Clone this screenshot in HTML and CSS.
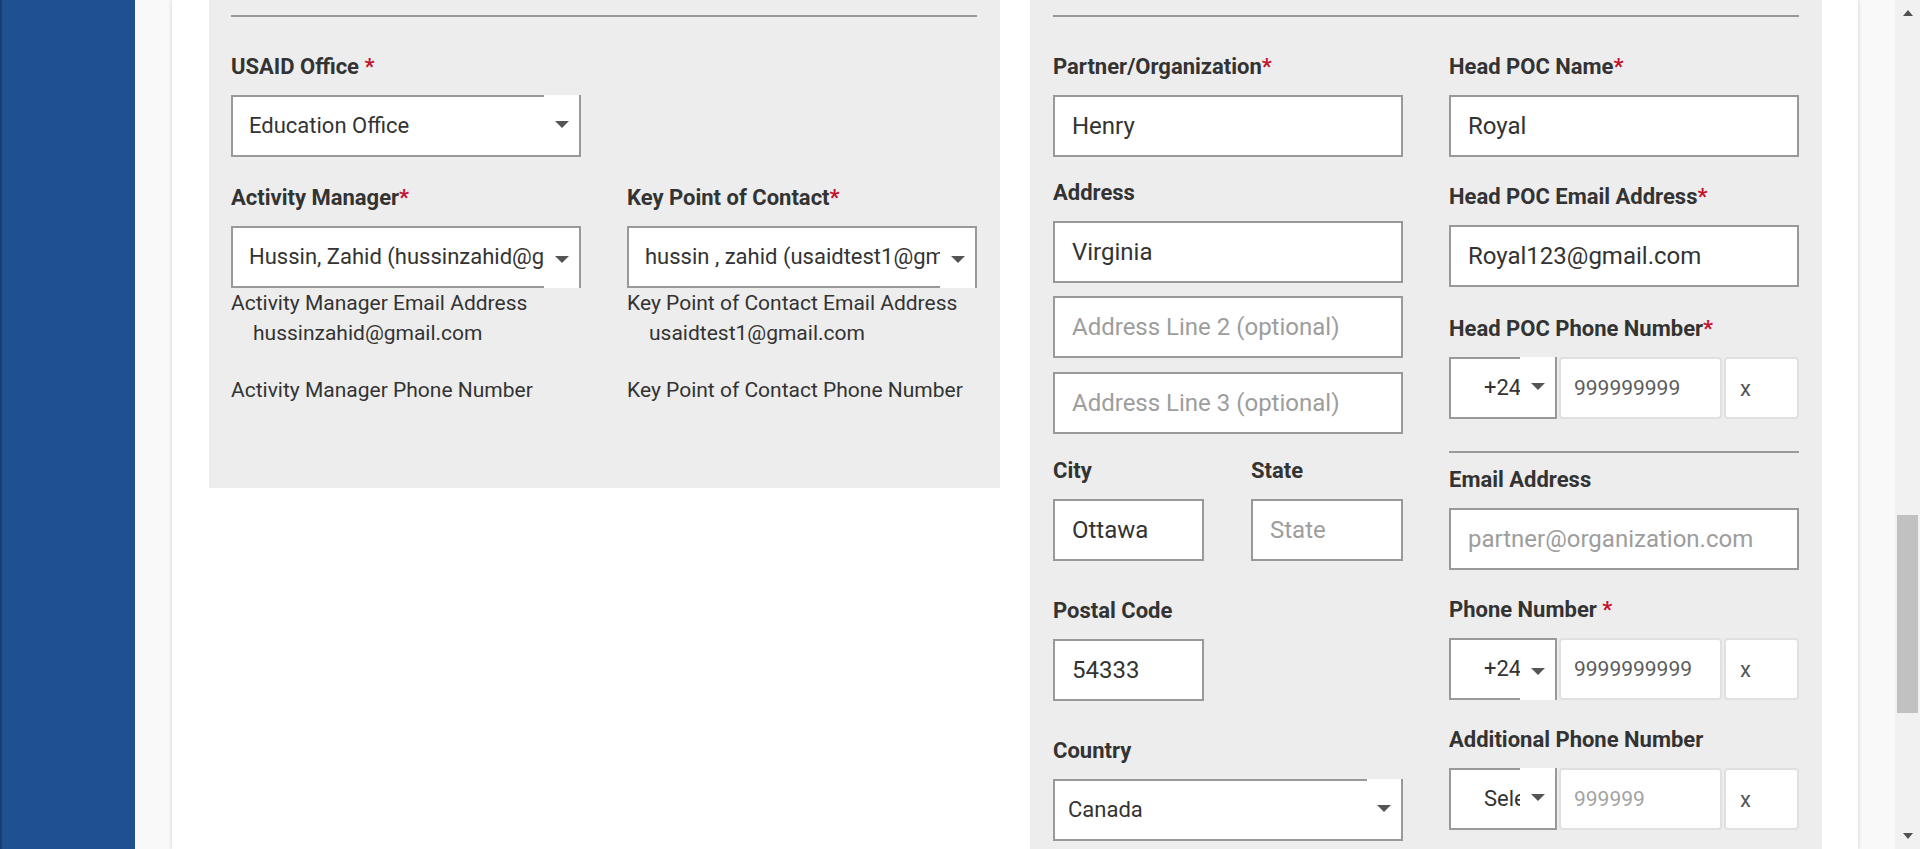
FILE: index.html
```html
<!DOCTYPE html>
<html lang="en">
<head>
<meta charset="utf-8">
<title>Partner Information</title>
<link rel="stylesheet" href="styles.css">
</head>
<body>
<div class="app">
  <aside class="sidebar"></aside>
  <div class="gutter">
    <main class="card">
      <section class="panel panel-usaid">
        <div class="rule"></div>
        <div class="f-office">
          <div class="lbl">USAID Office <span class="req">*</span></div>
          <div class="select">
            <span class="select-text">Education Office</span>
            <span class="arrow-box up"><i class="caret"></i></span>
          </div>
        </div>
        <div class="two-col f-people">
          <div class="col">
            <div class="lbl">Activity Manager<span class="req">*</span></div>
            <div class="select">
              <span class="select-text">Hussin, Zahid (hussinzahid@gmail.com)</span>
              <span class="arrow-box down"><i class="caret"></i></span>
            </div>
            <div class="info">
              <div>Activity Manager Email Address</div>
              <div class="info-val">hussinzahid@gmail.com</div>
              <div class="info-phone">Activity Manager Phone Number</div>
            </div>
          </div>
          <div class="col">
            <div class="lbl">Key Point of Contact<span class="req">*</span></div>
            <div class="select">
              <span class="select-text">hussin , zahid (usaidtest1@gmail.com)</span>
              <span class="arrow-box down"><i class="caret"></i></span>
            </div>
            <div class="info">
              <div>Key Point of Contact Email Address</div>
              <div class="info-val">usaidtest1@gmail.com</div>
              <div class="info-phone">Key Point of Contact Phone Number</div>
            </div>
          </div>
        </div>
      </section>

      <section class="panel panel-partner">
        <div class="rule"></div>
        <div class="two-col f-partner">
          <div class="col">
            <div class="field">
              <div class="lbl">Partner/Organization<span class="req">*</span></div>
              <input class="input" type="text" value="Henry">
            </div>
            <div class="field m-address">
              <div class="lbl">Address</div>
              <input class="input" type="text" value="Virginia">
            </div>
            <input class="input m-line2" type="text" placeholder="Address Line 2 (optional)">
            <input class="input m-line3" type="text" placeholder="Address Line 3 (optional)">
            <div class="city-state m-city">
              <div class="field">
                <div class="lbl">City</div>
                <input class="input" type="text" value="Ottawa">
              </div>
              <div class="field">
                <div class="lbl">State</div>
                <input class="input" type="text" placeholder="State">
              </div>
            </div>
            <div class="field m-postal">
              <div class="lbl">Postal Code</div>
              <input class="input input-short" type="text" value="54333">
            </div>
            <div class="field m-country">
              <div class="lbl">Country</div>
              <div class="select select-country">
                <span class="select-text">Canada</span>
                <span class="arrow-box up"><i class="caret"></i></span>
              </div>
            </div>
          </div>

          <div class="col">
            <div class="field">
              <div class="lbl">Head POC Name<span class="req">*</span></div>
              <input class="input" type="text" value="Royal">
            </div>
            <div class="field m-poc-email">
              <div class="lbl">Head POC Email Address<span class="req">*</span></div>
              <input class="input" type="text" value="Royal123@gmail.com">
            </div>
            <div class="field m-poc-phone">
              <div class="lbl">Head POC Phone Number<span class="req">*</span></div>
              <div class="phone-row">
                <div class="select select-code">
                  <span class="select-text">+24</span>
                  <span class="arrow-box up"><i class="caret"></i></span>
                </div>
                <input class="phone-num" type="text" value="999999999">
                <input class="phone-ext" type="text" value="x">
              </div>
            </div>
            <div class="divider"></div>
            <div class="field m-email">
              <div class="lbl">Email Address</div>
              <input class="input" type="text" placeholder="partner@organization.com">
            </div>
            <div class="field m-phone">
              <div class="lbl">Phone Number <span class="req">*</span></div>
              <div class="phone-row">
                <div class="select select-code">
                  <span class="select-text">+24</span>
                  <span class="arrow-box down"><i class="caret"></i></span>
                </div>
                <input class="phone-num" type="text" value="9999999999">
                <input class="phone-ext" type="text" value="x">
              </div>
            </div>
            <div class="field m-phone">
              <div class="lbl">Additional Phone Number</div>
              <div class="phone-row">
                <div class="select select-code">
                  <span class="select-text">Select</span>
                  <span class="arrow-box up"><i class="caret"></i></span>
                </div>
                <input class="phone-num" type="text" placeholder="999999">
                <input class="phone-ext" type="text" value="x">
              </div>
            </div>
          </div>
        </div>
      </section>
    </main>
  </div>
  <div class="scrollbar">
    <i class="sb-up"></i>
    <div class="sb-thumb"></div>
    <i class="sb-down"></i>
  </div>
</div>
</body>
</html>
```

FILE: styles.css
```css
* { box-sizing: border-box; }

html, body {
  margin: 0;
  padding: 0;
  height: 100%;
}

body {
  font-family: Roboto, "Liberation Sans", Arial, sans-serif;
  color: #333;
  background: #f9f9f9;
  overflow: hidden;
}

.app {
  display: flex;
  height: 849px;
  overflow: hidden;
}

.sidebar {
  width: 135px;
  flex: none;
  background: #1f5190;
  border-left: 2px solid #173f70;
}

.gutter {
  flex: 1;
  min-width: 0;
  display: flex;
  background: #f9f9f9;
  padding: 0 37px;
}

.card {
  flex: 1;
  display: flex;
  align-items: flex-start;
  gap: 30px;
  background: #fff;
  box-shadow: 0 0 4px rgba(0, 0, 0, 0.18);
  padding: 0 36px 0 37px;
}

.panel {
  background: #ededed;
  padding-top: 15px;
}

.panel-usaid {
  width: 791px;
  padding: 15px 23px 83px 22px;
}

.panel-partner {
  width: 792px;
  align-self: stretch;
  padding: 15px 23px 0 23px;
}

.rule {
  height: 2px;
  background: #999;
}

.lbl {
  font-size: 22px;
  font-weight: 700;
  line-height: 24px;
  color: #333;
  margin-bottom: 16px;
  white-space: nowrap;
}

.req { color: #c41230; font-weight: 700; }

.two-col {
  display: grid;
  grid-template-columns: 350px 350px;
  justify-content: space-between;
}

.col { display: flex; flex-direction: column; }

.f-office { margin-top: 38px; width: 350px; }
.f-people { margin-top: 29px; }
.f-partner { margin-top: 38px; align-items: start; }

/* custom select */
.select {
  position: relative;
  height: 62px;
  border: 2px solid #999;
  background: #fff;
  display: flex;
  align-items: center;
  padding-left: 16px;
}

.select-text {
  flex: 1;
  min-width: 0;
  overflow: hidden;
  white-space: nowrap;
  font-size: 22px;
  line-height: 24px;
  color: #333;
}

.arrow-box {
  position: absolute;
  right: 0;
  width: 35px;
  background: #fff;
  display: flex;
  align-items: center;
  justify-content: center;
}

.arrow-box.up { top: -2px; bottom: 2px; }
.arrow-box.down { top: 2px; bottom: -2px; }

.caret {
  width: 0;
  height: 0;
  border-left: 7px solid transparent;
  border-right: 7px solid transparent;
  border-top: 7px solid #555;
}

.select-country { padding-left: 13px; }
.select-country .arrow-box { width: 34px; }

/* info texts */
.info {
  font-size: 21px;
  line-height: 30px;
  color: #333;
}

.info-val { padding-left: 22px; }
.info-phone { margin-top: 27px; }

/* text inputs */
.input {
  display: block;
  width: 100%;
  height: 62px;
  border: 2px solid #999;
  border-radius: 0;
  background: #fff;
  padding: 0 17px;
  font-family: Roboto, "Liberation Sans", Arial, sans-serif;
  font-size: 24px;
  color: #333;
  outline: none;
}

.input::placeholder { color: #9d9d9d; opacity: 1; }

.input-short { width: 151px; }

.m-address { margin-top: 24px; }
.m-line2 { margin-top: 13px; }
.m-line3 { margin-top: 14px; }
.m-city { margin-top: 25px; }
.m-postal { margin-top: 38px; }
.m-country { margin-top: 38px; }

.city-state {
  display: grid;
  grid-template-columns: 151px 152px;
  justify-content: space-between;
}

.m-poc-email { margin-top: 28px; }
.m-poc-phone { margin-top: 30px; }
.m-email { margin-top: 15px; }
.m-phone { margin-top: 28px; }

.divider {
  height: 2px;
  background: #999;
  margin-top: 32px;
}

/* phone rows */
.phone-row {
  display: grid;
  grid-template-columns: 108px 163px 75px;
  column-gap: 2px;
  height: 62px;
}

.select-code { padding-left: 33px; }

.phone-num,
.phone-ext {
  height: 62px;
  width: 100%;
  border: 2px solid #e0e0e0;
  border-radius: 4px;
  background: #fff;
  padding: 0 13px;
  font-family: Roboto, "Liberation Sans", Arial, sans-serif;
  font-size: 21px;
  color: #5c5c5c;
  outline: none;
}

.phone-num::placeholder { color: #a3a3a3; opacity: 1; }
.phone-ext { font-size: 22px; color: #555; padding-left: 14px; }

/* scrollbar */
.scrollbar {
  width: 25px;
  flex: none;
  background: #f1f1f1;
  display: flex;
  flex-direction: column;
  align-items: center;
  padding-top: 10px;
}

.sb-up,
.sb-down {
  width: 0;
  height: 0;
  border-left: 5.5px solid transparent;
  border-right: 5.5px solid transparent;
}

.sb-up { border-bottom: 6px solid #505050; }

.sb-thumb {
  width: 21px;
  height: 198px;
  margin-top: 499px;
  background: #c1c1c1;
}

.sb-down {
  border-top: 6px solid #505050;
  margin-top: 120px;
}
```
